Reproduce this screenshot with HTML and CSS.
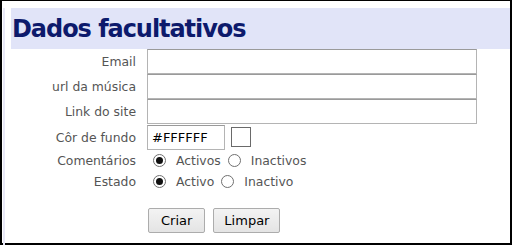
FILE: index.html
```html
<!DOCTYPE html>
<html lang="pt">
<head>
<meta charset="utf-8">
<title>Dados facultativos</title>
<link rel="stylesheet" href="styles.css">
</head>
<body>
<div class="frame">
  <div class="inner">
    <h1 class="title">Dados facultativos</h1>
    <form class="form">
      <label class="lbl" for="email">Email</label>
      <input class="txt" id="email" type="text">
      <label class="lbl" for="url">url da música</label>
      <input class="txt" id="url" type="text">
      <label class="lbl" for="site">Link do site</label>
      <input class="txt" id="site" type="text">
      <label class="lbl" for="cor">Côr de fundo</label>
      <div class="color-row">
        <input class="txt color" id="cor" type="text" value="#FFFFFF">
        <span class="swatch"></span>
      </div>
      <span class="lbl">Comentários</span>
      <div class="radios">
        <label class="opt"><input class="radio" type="radio" name="com" checked><span>Activos</span></label>
        <label class="opt"><input class="radio" type="radio" name="com"><span>Inactivos</span></label>
      </div>
      <span class="lbl">Estado</span>
      <div class="radios">
        <label class="opt"><input class="radio" type="radio" name="est" checked><span>Activo</span></label>
        <label class="opt"><input class="radio" type="radio" name="est"><span>Inactivo</span></label>
      </div>
      <div class="actions">
        <button class="btn" type="button">Criar</button>
        <button class="btn" type="button">Limpar</button>
      </div>
    </form>
  </div>
</div>
</body>
</html>
```
FILE: styles.css
```css
html, body {
  margin: 0;
  padding: 0;
  background: #fff;
}
.frame {
  box-sizing: border-box;
  width: 512px;
  height: 245px;
  border: 2px solid #000;
  border-top-width: 1px;
  padding-left: 1px;
  background: #fff;
  font-family: "DejaVu Sans", Verdana, sans-serif;
}
.inner {
  height: 100%;
  border-left: 2px solid #e8e8f7;
}
.title {
  margin: 7px 0 0 6px;
  height: 41px;
  display: flex;
  align-items: center;
  padding-left: 1px;
  background: #e1e4f8;
  color: #0d1a6c;
  font-size: 24px;
  font-weight: bold;
  letter-spacing: -1.05px;
}
.form {
  display: grid;
  grid-template-columns: 131px 330px;
  grid-template-rows: 25px 25px 25px 26px 21px 21px auto;
  column-gap: 11px;
  margin: 0;
}
.lbl {
  align-self: center;
  text-align: right;
  color: #555;
  font-size: 12.4px;
}
.txt {
  box-sizing: border-box;
  width: 330px;
  height: 25px;
  margin: 0;
  border: 1px solid #b4b4b4;
  border-top-color: #9a9a9a;
  padding: 0 4px;
  font-family: "DejaVu Sans", Verdana, sans-serif;
  font-size: 13px;
  color: #000;
  background: #fff;
  outline: none;
}
.color-row {
  display: flex;
  align-items: center;
}
.txt.color {
  width: 78px;
}
.swatch {
  box-sizing: border-box;
  width: 20px;
  height: 20px;
  margin-left: 6px;
  border: 1px solid #6a6a6a;
  background: #fff;
}
.radios {
  display: flex;
  align-items: center;
  padding-left: 6px;
  gap: 7px;
}
.opt {
  display: flex;
  align-items: center;
  gap: 10px;
  color: #555;
  font-size: 12.4px;
}
.radio {
  appearance: none;
  -webkit-appearance: none;
  box-sizing: border-box;
  width: 13px;
  height: 13px;
  margin: 0;
  border: 1px solid #707070;
  border-radius: 50%;
  background: #fff;
  display: grid;
  place-content: center;
}
.radio:checked::before {
  content: "";
  width: 7px;
  height: 7px;
  border-radius: 50%;
  background: #111;
}
.actions {
  grid-column: 2;
  display: flex;
  gap: 8px;
  margin: 16px 0 0 1px;
}
.btn {
  box-sizing: border-box;
  height: 25px;
  padding: 0 12px;
  border: 1px solid #acacac;
  border-radius: 2px;
  background: linear-gradient(#f3f3f3, #e4e4e4);
  color: #000;
  font-family: "DejaVu Sans", Verdana, sans-serif;
  font-size: 13px;
}
.btn + .btn {
  padding: 0 10px;
}
```
